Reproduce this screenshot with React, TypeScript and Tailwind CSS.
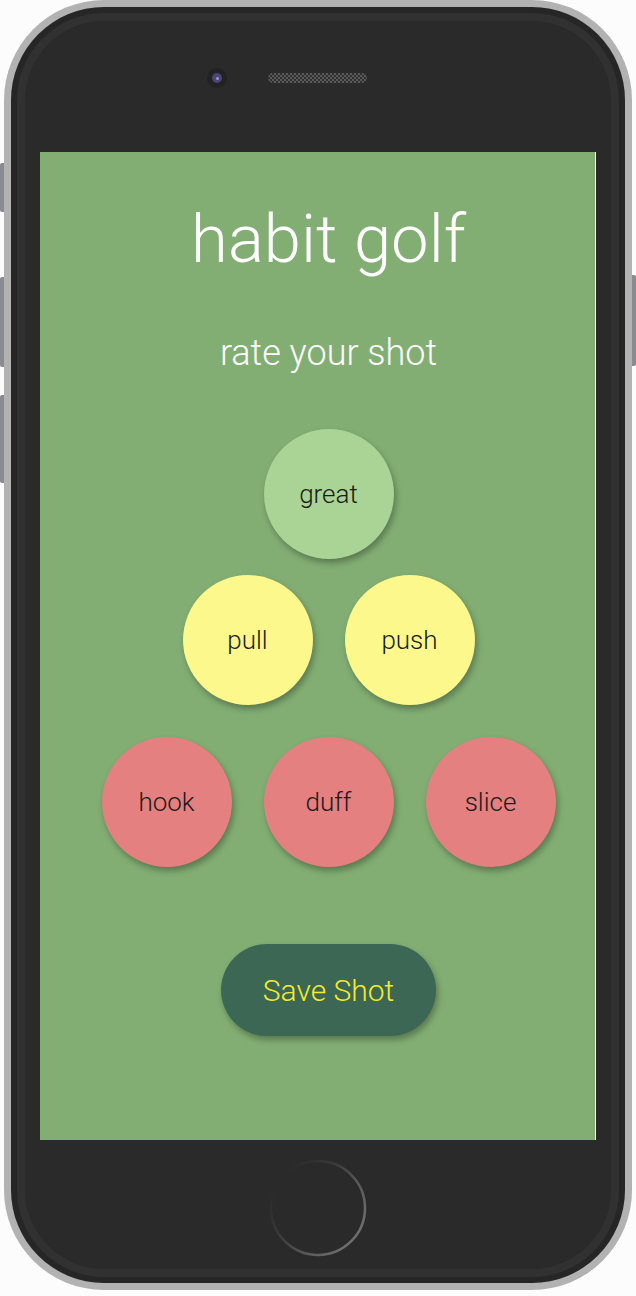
const font = { fontFamily: "'Roboto Light', Roboto, 'Noto Sans', sans-serif" };

type Shot = { label: string; tone: string };

const rows: Shot[][] = [
  [{ label: "great", tone: "bg-[#a9d495]" }],
  [
    { label: "pull", tone: "bg-[#fcf88b]" },
    { label: "push", tone: "bg-[#fcf88b]" },
  ],
  [
    { label: "hook", tone: "bg-[#e48080]" },
    { label: "duff", tone: "bg-[#e48080]" },
    { label: "slice", tone: "bg-[#e48080]" },
  ],
];

function ShotButton({ shot }: { shot: Shot }) {
  return (
    <button
      className={`flex h-[130px] w-[130px] items-center justify-center rounded-full ${shot.tone} text-[26px] font-light text-[#1a1a1a] shadow-[2px_4px_6px_rgba(0,0,0,0.3)]`}
    >
      {shot.label}
    </button>
  );
}

function HomeButton() {
  return (
    <svg width="100" height="100" viewBox="0 0 100 100">
      <defs>
        <linearGradient id="ring" x1="0.1" y1="0.2" x2="0.9" y2="0.8">
          <stop offset="0" stopColor="#2a2a2a" />
          <stop offset="0.35" stopColor="#3a3a3a" />
          <stop offset="0.7" stopColor="#5a5a5a" />
          <stop offset="1" stopColor="#6e6e6e" />
        </linearGradient>
      </defs>
      <circle cx="50" cy="50" r="47" fill="none" stroke="url(#ring)" strokeWidth="2.5" />
    </svg>
  );
}

export default function App() {
  return (
    <div className="h-[1296px] w-[636px] bg-[#fcfcfc] pl-[4px]" style={font}>
      <div className="relative h-[1290px] w-[628px] rounded-[100px] bg-[#b2b2b2] p-[7px]">
        {/* side keys */}
        <div className="absolute left-[-4px] top-[163px] h-[49px] w-[4px] rounded-l-[2px] bg-[#8a8a91]" />
        <div className="absolute left-[-4px] top-[277px] h-[90px] w-[4px] rounded-l-[2px] bg-[#8a8a91]" />
        <div className="absolute left-[-4px] top-[395px] h-[88px] w-[4px] rounded-l-[2px] bg-[#8a8a91]" />
        <div className="absolute right-[-4px] top-[275px] h-[91px] w-[4px] rounded-r-[2px] bg-[#8a8a91]" />

        <div className="h-full rounded-[93px] bg-[#262626] p-[6px]">
          <div className="flex h-full flex-col rounded-[87px] border-[8px] border-[#313131] bg-[#2a2a2a]">
            <div className="flex h-[131px] items-start gap-[41px] pl-[182px] pt-[47px]">
              <div className="flex h-[20px] w-[20px] items-center justify-center rounded-full bg-[#222]">
                <div className="flex h-[10px] w-[10px] items-center justify-center rounded-full bg-[#4a4577]">
                  <div className="h-[3px] w-[3px] rounded-full bg-[#9a97b8]" />
                </div>
              </div>
              <div className="mt-[5px] h-[10px] w-[99px] rounded-full bg-[repeating-conic-gradient(#5a5a5a_0_25%,#303030_0_50%)] bg-[length:4px_4px]" />
            </div>

            <div className="mx-auto flex h-[988px] w-[556px] flex-col items-center border-r border-white bg-[#82ae73] pl-[22px]">
              <h1 className="mt-[54px] text-[67px] font-light leading-none text-white">habit golf</h1>
              <p className="mt-[62px] text-[36px] font-light leading-none text-white">rate your shot</p>

              <div className="mt-[58px] flex flex-col items-center">
                <div className="flex gap-[32px]">
                  {rows[0].map((s) => (
                    <ShotButton key={s.label} shot={s} />
                  ))}
                </div>
                <div className="mt-[16px] flex gap-[32px]">
                  {rows[1].map((s) => (
                    <ShotButton key={s.label} shot={s} />
                  ))}
                </div>
                <div className="mt-[32px] flex gap-[32px]">
                  {rows[2].map((s) => (
                    <ShotButton key={s.label} shot={s} />
                  ))}
                </div>
              </div>

              <button className="mt-[77px] h-[92px] w-[215px] rounded-full bg-[#3b6754] text-[30px] font-light text-[#f6ea2d] shadow-[2px_4px_6px_rgba(0,0,0,0.3)]">
                Save Shot
              </button>
            </div>

            <div className="flex flex-1 justify-center pt-[18px]">
              <HomeButton />
            </div>
          </div>
        </div>
      </div>
    </div>
  );
}
